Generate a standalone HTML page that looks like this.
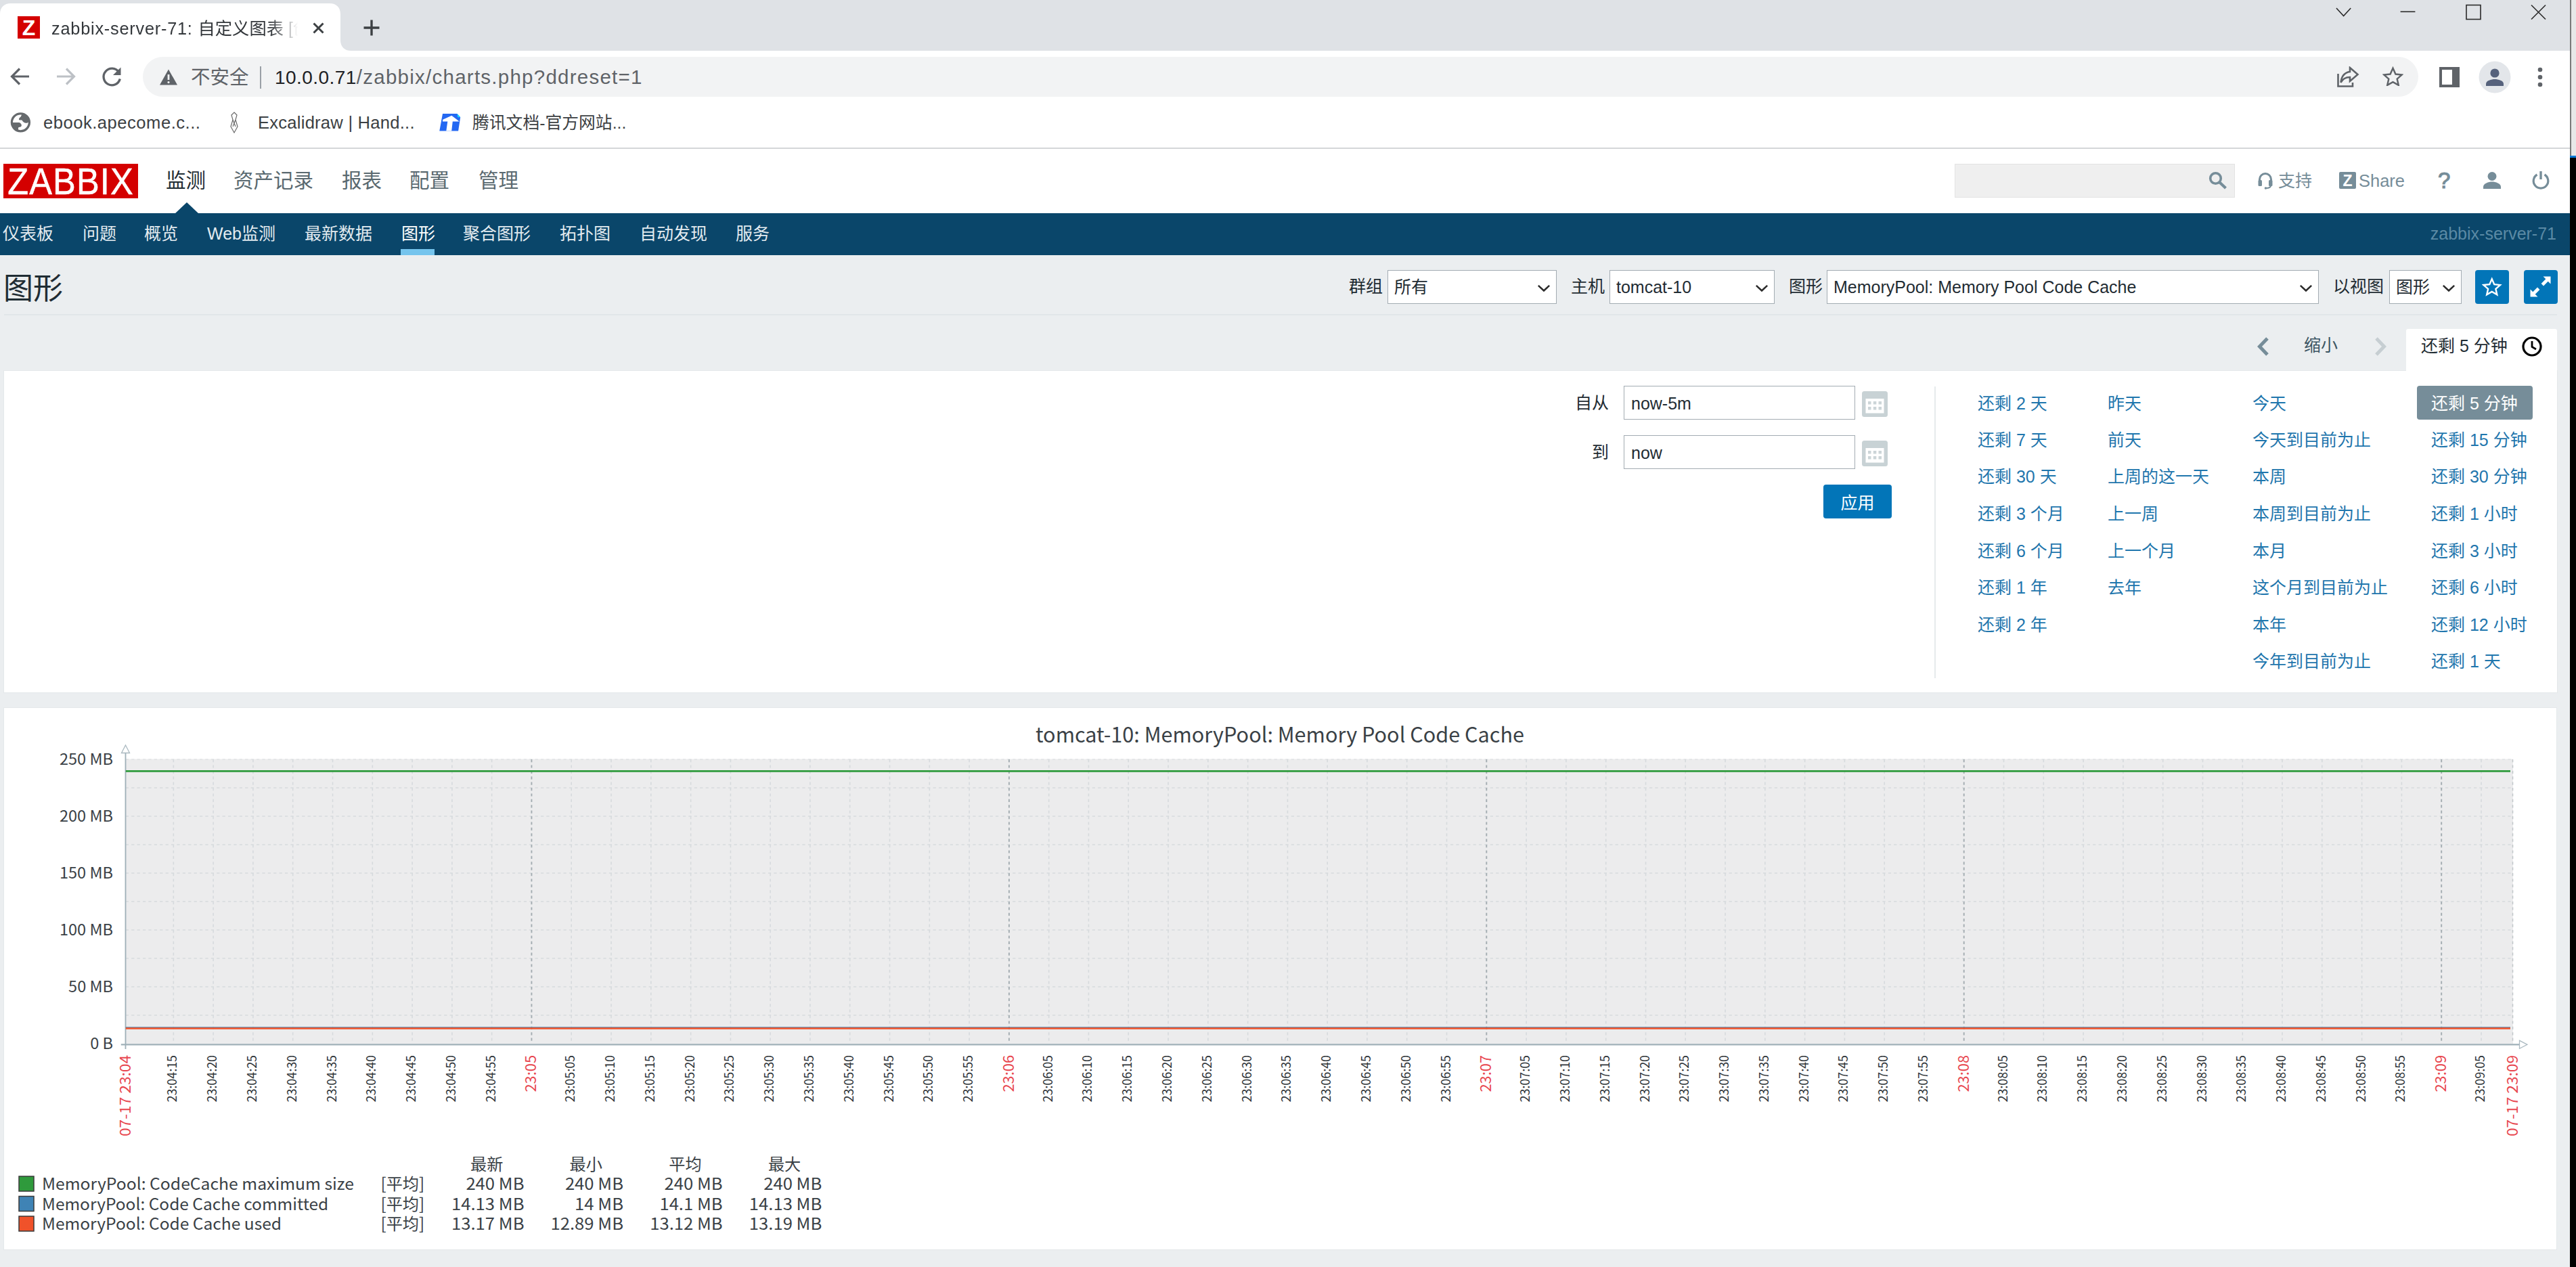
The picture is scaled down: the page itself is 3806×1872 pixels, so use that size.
<!DOCTYPE html>
<html lang="zh-CN"><head><meta charset="utf-8"><title>zabbix-server-71: 自定义图表</title>
<style>
html,body{margin:0;padding:0;background:#ebeef0}
body{width:3806px;height:1872px;position:relative;overflow:hidden;font-family:'Liberation Sans','Noto Sans CJK SC',sans-serif}
body>div,body>svg{position:absolute;display:block}
.t{white-space:pre}
</style></head><body>
<div style="left:0px;top:0px;width:3798px;height:75px;background:#dfe2e6;"></div>
<svg style="left:-16px;top:5px" width="540" height="70" viewBox="0 0 540 70"><path d="M0 70 C10 70 16 64 16 54 L16 16 C16 6 22 0 32 0 L503 0 C513 0 519 6 519 16 L519 54 C519 64 525 70 535 70 Z" fill="#fff"/></svg>
<div style="left:0px;top:75px;width:3798px;height:144px;background:#fff;"></div>
<div style="left:0px;top:218px;width:3798px;height:2px;background:#d4d6d8;"></div>
<div style="left:26px;top:24px;width:33px;height:33px;background:#d40000;color:#fff;font:bold 32px/34px 'Liberation Sans',sans-serif;text-align:center">Z</div>
<div class="t" style="left:76px;top:25px;width:368px;overflow:hidden;font:25.3px/34px 'Liberation Sans','Noto Sans CJK SC',sans-serif;color:#33373b;-webkit-mask-image:linear-gradient(90deg,#000 88%,transparent 99%);mask-image:linear-gradient(90deg,#000 88%,transparent 99%)"><span style="letter-spacing:0.78px">zabbix-server-71: </span>自定义图表 [创建</div>
<svg style="left:462px;top:33px" width="17" height="17" viewBox="0 0 17 17"><path d="M1.5 1.5 L15.5 15.5 M15.5 1.5 L1.5 15.5" stroke="#3c4043" stroke-width="3" fill="none"/></svg>
<svg style="left:537px;top:29px" width="24" height="24" viewBox="0 0 24 24"><path d="M12 0.5 V23.5 M0.5 12 H23.5" stroke="#3c4043" stroke-width="3.4" fill="none"/></svg>
<svg style="left:3440px;top:0" width="340" height="40" viewBox="0 0 340 40"><g stroke="#2b2b2b" stroke-width="1.6" fill="none"><path d="M12 12 L22.6 23.5 L33.2 12"/><path d="M106.6 17.3 H128.4"/><rect x="204" y="7.5" width="21" height="21"/><path d="M300 7.5 L321 28.5 M321 7.5 L300 28.5"/></g></svg>
<svg style="left:14px;top:98px" width="32" height="30" viewBox="0 0 32 30"><path d="M29 15 H4 M15 3.5 L3.5 15 L15 26.5" stroke="#5f6368" stroke-width="3.2" fill="none"/></svg>
<svg style="left:81px;top:98px" width="32" height="30" viewBox="0 0 32 30"><path d="M3 15 H28 M17 3.5 L28.5 15 L17 26.5" stroke="#bdc1c6" stroke-width="3.2" fill="none"/></svg>
<svg style="left:148px;top:97px" width="34" height="34" viewBox="0 0 34 34"><path d="M27.5 9.5 A12.3 12.3 0 1 0 29.3 19.5" stroke="#5f6368" stroke-width="3.3" fill="none"/><path d="M30.5 2.5 V14 H19 Z" fill="#5f6368"/></svg>
<div style="left:211px;top:84px;width:3362px;height:59px;background:#f2f3f4;border-radius:30px"></div>
<svg style="left:235px;top:101px" width="28" height="26" viewBox="0 0 28 26"><path d="M14 1.5 L27 24.5 H1 Z" fill="#5f6368"/><path d="M14 9 V17" stroke="#f1f3f4" stroke-width="2.8"/><circle cx="14" cy="20.6" r="1.6" fill="#f1f3f4"/></svg>
<div class="t" style="left:282px;top:93.5px;font:28.5px/40px 'Liberation Sans','Noto Sans CJK SC',sans-serif;color:#5f6368;">不安全</div>
<div style="left:384px;top:98px;width:2px;height:33px;background:#9aa0a6;"></div>
<div class="t" style="left:406px;top:93.5px;font:28px/39px 'Liberation Sans','Noto Sans CJK SC',sans-serif;color:#5f6368;letter-spacing:0.45px"><span style="color:#202124">10.0.0.71</span><span style="font-size:29.5px;letter-spacing:1.25px">/zabbix/charts.php?ddreset=1</span></div>
<svg style="left:3451px;top:98px" width="36" height="32" viewBox="0 0 36 32"><g stroke="#5f6368" stroke-width="2.6" fill="none" stroke-linejoin="miter"><path d="M3.5 11 V29.5 H25 V24"/><path d="M21 2 L32.5 12 L21 22 V16 C14 16 10 19 7.5 24 C8.5 15 13 9 21 8 Z"/></g></svg>
<svg style="left:3519.5px;top:98px" width="31" height="29.200" viewBox="0 0 34 32"><path d="M17 3 L21.3 12.6 L31.6 13.6 L23.8 20.5 L26.1 30.6 L17 25.3 L7.9 30.6 L10.2 20.5 L2.4 13.6 L12.7 12.6 Z" stroke="#5f6368" stroke-width="2.7" fill="none"/></svg>
<svg style="left:3604px;top:99px" width="30" height="30" viewBox="0 0 30 30"><rect x="2" y="2" width="26" height="26" stroke="#5f6368" stroke-width="4" fill="none"/><rect x="19" y="2" width="9" height="26" fill="#5f6368"/></svg>
<svg style="left:3662px;top:90px" width="48" height="48" viewBox="0 0 48 48"><circle cx="24" cy="24" r="23.5" fill="#e3e6ea"/><circle cx="24" cy="18" r="6.6" fill="#56627c"/><path d="M11 37 V34 C11 29 19 27 24 27 C29 27 37 29 37 34 V37 Z" fill="#56627c"/></svg>
<svg style="left:3748px;top:98px" width="10" height="32" viewBox="0 0 10 32"><g fill="#5f6368"><circle cx="5" cy="5" r="3.3"/><circle cx="5" cy="16" r="3.3"/><circle cx="5" cy="27" r="3.3"/></g></svg>
<svg style="left:15px;top:166px" width="31" height="31" viewBox="0 0 31 31"><defs><clipPath id="gc"><circle cx="15.400" cy="14.800" r="13.500"/></clipPath></defs><circle cx="15.400" cy="14.800" r="13" fill="#fff" stroke="#666a6d" stroke-width="3.300"/><g clip-path="url(#gc)" fill="#666a6d"><path d="M17.500 2 L31 2 L31 12 L27 14.500 C25.500 16 23.500 16 22 15.500 C20 15 18.500 13.500 17.500 11.500 L13.100 11.200 C12.800 9.500 13.300 8.400 14.500 7.500 C16 6.500 16.500 5 17.500 2 Z"/><path d="M0 15 L13.500 15 C15.500 16 17 17.500 16.800 19.500 C16.700 21 15.500 21.800 12.500 22 C11.500 24 11.800 26.500 13 29 L0 31 Z"/></g></svg>
<div class="t" style="left:64px;top:163.0px;font:25.6px/36px 'Liberation Sans','Noto Sans CJK SC',sans-serif;color:#3c4043;letter-spacing:0.5px">ebook.apecome.c...</div>
<svg style="left:338px;top:165px" width="16" height="32" viewBox="0 0 16 32"><path d="M8 1 L12 5 L10 12 L13 22 L8 31 L3 22 L6 12 L4 5 Z M6 12 L10 22 M10 12 L6 22" stroke="#6b6b6b" stroke-width="1.2" fill="none"/></svg>
<div class="t" style="left:381px;top:163.0px;font:25.6px/36px 'Liberation Sans','Noto Sans CJK SC',sans-serif;color:#3c4043;letter-spacing:0.23px">Excalidraw | Hand...</div>
<svg style="left:649px;top:167px" width="33" height="28" viewBox="0 0 33 28"><path d="M5 1 H26.500 L31.200 6.300 L28.100 26.500 H0.300 Z" fill="#2468f2"/><path d="M26.500 1 L31.200 6.300 H27.300 Z" fill="#12dcff"/><path d="M5.200 9.800 L18.300 3.800 L29.700 12.600 H19.800 L18.200 26.500 H10.300 L12.300 12.600 H5 Z" fill="#fff"/></svg>
<div class="t" style="left:698px;top:163.5px;font:24.8px/35px 'Liberation Sans','Noto Sans CJK SC',sans-serif;color:#3c4043;">腾讯文档-官方网站...</div>
<div style="left:3797px;top:0px;width:2px;height:230px;background:#7a7a7a;"></div>
<div style="left:3799px;top:0px;width:7px;height:230px;background:#e8e8e8;"></div>
<div style="left:3797px;top:230px;width:9px;height:3px;background:#0a78d6;"></div>
<div style="left:3797px;top:233px;width:9px;height:1639px;background:#000;"></div>
<div style="left:0px;top:220px;width:3797px;height:1652px;background:#ebeef0;"></div>
<div style="left:0px;top:220px;width:3797px;height:95px;background:#fff;"></div>
<div class="t" style="left:5px;top:242px;width:199px;height:51px;background:#d40000;overflow:hidden"><span style="position:absolute;left:-20px;top:-4.5px;width:239px;text-align:center;color:#fff;font:55.5px/60px 'Liberation Sans',sans-serif;letter-spacing:1.2px;transform:scaleX(0.912);-webkit-text-stroke:0.5px #fff">ZABBIX</span></div>
<div class="t" style="left:245px;top:245.5px;font:29.5px/41px 'Liberation Sans','Noto Sans CJK SC',sans-serif;color:#1f2c33;">监测</div>
<div class="t" style="left:345px;top:245.5px;font:29.5px/41px 'Liberation Sans','Noto Sans CJK SC',sans-serif;color:#5a6970;">资产记录</div>
<div class="t" style="left:505px;top:245.5px;font:29.5px/41px 'Liberation Sans','Noto Sans CJK SC',sans-serif;color:#5a6970;">报表</div>
<div class="t" style="left:605px;top:245.5px;font:29.5px/41px 'Liberation Sans','Noto Sans CJK SC',sans-serif;color:#5a6970;">配置</div>
<div class="t" style="left:707px;top:245.5px;font:29.5px/41px 'Liberation Sans','Noto Sans CJK SC',sans-serif;color:#5a6970;">管理</div>
<div style="left:2888px;top:242px;width:414px;height:50px;background:#efefef;box-shadow:inset 0 0 0 1px #e3e3e3"></div>
<svg style="left:3263px;top:253px" width="28" height="27" viewBox="0 0 28 27"><circle cx="10.5" cy="10.5" r="7.8" stroke="#768d99" stroke-width="3.6" fill="none"/><path d="M16 16 L25.5 25" stroke="#768d99" stroke-width="4.2"/></svg>
<svg style="left:3335px;top:254px" width="24" height="26" viewBox="0 0 24 26"><path d="M3.5 14 V11 A8.5 8.5 0 0 1 20.500 11 V14" stroke="#768d99" stroke-width="3" fill="none"/><rect x="1.5" y="12" width="5.5" height="9" rx="1.5" fill="#768d99"/><rect x="17" y="12" width="5.500" height="9" rx="1.5" fill="#768d99"/><path d="M20 20 C20 23 17 24 13 24" stroke="#768d99" stroke-width="2.2" fill="none"/><circle cx="12.5" cy="24" r="1.8" fill="#768d99"/></svg>
<div class="t" style="left:3366px;top:249.7px;font:25px/35px 'Liberation Sans','Noto Sans CJK SC',sans-serif;color:#768d99;">支持</div>
<div style="left:3456px;top:254px;width:25px;height:25px;background:#768d99;border-radius:2px;color:#fff;font:bold 23px/26px 'Liberation Sans',sans-serif;text-align:center">Z</div>
<div class="t" style="left:3485px;top:249.0px;font:25.5px/36px 'Liberation Sans','Noto Sans CJK SC',sans-serif;color:#768d99;">Share</div>
<div class="t" style="left:3602px;top:244.0px;font:33px/46px 'Liberation Sans','Noto Sans CJK SC',sans-serif;color:#768d99;-webkit-text-stroke:1.1px #768d99">?</div>
<svg style="left:3668px;top:253px" width="28" height="27" viewBox="0 0 28 27"><circle cx="14" cy="7.5" r="6.5" fill="#768d99"/><path d="M1 26 V23 C1 18 9 15.500 14 15.500 C19 15.500 27 18 27 23 V26 Z" fill="#768d99"/></svg>
<svg style="left:3740px;top:252px" width="28" height="28" viewBox="0 0 28 28"><path d="M8.5 6 A10.800 10.800 0 1 0 19.500 6" stroke="#768d99" stroke-width="3.2" fill="none"/><path d="M14 1 V13" stroke="#768d99" stroke-width="3.4"/></svg>
<div style="left:0px;top:315px;width:3797px;height:62px;background:#0a466a;"></div>
<svg style="left:258px;top:299px" width="36" height="17" viewBox="0 0 36 17"><path d="M0 17 L18 0 L36 17 Z" fill="#0a466a"/></svg>
<div class="t" style="left:4px;top:327.5px;font:25px/35px 'Liberation Sans','Noto Sans CJK SC',sans-serif;color:#e3ebf0;">仪表板</div>
<div class="t" style="left:122px;top:327.5px;font:25px/35px 'Liberation Sans','Noto Sans CJK SC',sans-serif;color:#e3ebf0;">问题</div>
<div class="t" style="left:213px;top:327.5px;font:25px/35px 'Liberation Sans','Noto Sans CJK SC',sans-serif;color:#e3ebf0;">概览</div>
<div class="t" style="left:306px;top:327.5px;font:25px/35px 'Liberation Sans','Noto Sans CJK SC',sans-serif;color:#e3ebf0;">Web监测</div>
<div class="t" style="left:450px;top:327.5px;font:25px/35px 'Liberation Sans','Noto Sans CJK SC',sans-serif;color:#e3ebf0;">最新数据</div>
<div class="t" style="left:684px;top:327.5px;font:25px/35px 'Liberation Sans','Noto Sans CJK SC',sans-serif;color:#e3ebf0;">聚合图形</div>
<div class="t" style="left:827px;top:327.5px;font:25px/35px 'Liberation Sans','Noto Sans CJK SC',sans-serif;color:#e3ebf0;">拓扑图</div>
<div class="t" style="left:945px;top:327.5px;font:25px/35px 'Liberation Sans','Noto Sans CJK SC',sans-serif;color:#e3ebf0;">自动发现</div>
<div class="t" style="left:1087px;top:327.5px;font:25px/35px 'Liberation Sans','Noto Sans CJK SC',sans-serif;color:#e3ebf0;">服务</div>
<div class="t" style="left:593px;top:327.5px;font:25px/35px 'Liberation Sans','Noto Sans CJK SC',sans-serif;color:#fff;">图形</div>
<div style="left:592px;top:368px;width:50px;height:9px;background:#75c4ed;"></div>
<div class="t" style="right:29px;top:327.5px;font:25px/35px 'Liberation Sans','Noto Sans CJK SC',sans-serif;color:#5b8aa5;">zabbix-server-71</div>
<div class="t" style="left:5px;top:397.0px;font:44px/60px 'Liberation Sans','Noto Sans CJK SC',sans-serif;color:#1f2c33;">图形</div>
<div class="t" style="left:1993px;top:406.0px;font:25px/35px 'Liberation Sans','Noto Sans CJK SC',sans-serif;color:#1f2c33;">群组</div>
<div style="left:2050px;top:399px;width:250px;height:50px;background:#fff;border:1px solid #a3acb2;box-sizing:border-box"></div>
<div class="t" style="left:2060px;top:406.8px;font:25px/35px 'Liberation Sans','Noto Sans CJK SC',sans-serif;color:#1f2c33;">所有</div>
<svg style="left:2270.5px;top:419.5px" width="20" height="11.800" viewBox="0 0 22 13"><path d="M2 2 L11 10.500 L20 2" stroke="#2b2b2b" stroke-width="2.8" fill="none"/></svg>
<div class="t" style="left:2321px;top:406.0px;font:25px/35px 'Liberation Sans','Noto Sans CJK SC',sans-serif;color:#1f2c33;">主机</div>
<div style="left:2378px;top:399px;width:244px;height:50px;background:#fff;border:1px solid #a3acb2;box-sizing:border-box"></div>
<div class="t" style="left:2388px;top:406.8px;font:25px/35px 'Liberation Sans','Noto Sans CJK SC',sans-serif;color:#1f2c33;">tomcat-10</div>
<svg style="left:2592.5px;top:419.5px" width="20" height="11.800" viewBox="0 0 22 13"><path d="M2 2 L11 10.500 L20 2" stroke="#2b2b2b" stroke-width="2.8" fill="none"/></svg>
<div class="t" style="left:2643px;top:406.0px;font:25px/35px 'Liberation Sans','Noto Sans CJK SC',sans-serif;color:#1f2c33;">图形</div>
<div style="left:2699px;top:399px;width:727px;height:50px;background:#fff;border:1px solid #a3acb2;box-sizing:border-box"></div>
<div class="t" style="left:2709px;top:406.8px;font:25px/35px 'Liberation Sans','Noto Sans CJK SC',sans-serif;color:#1f2c33;">MemoryPool: Memory Pool Code Cache</div>
<svg style="left:3396.5px;top:419.5px" width="20" height="11.800" viewBox="0 0 22 13"><path d="M2 2 L11 10.500 L20 2" stroke="#2b2b2b" stroke-width="2.8" fill="none"/></svg>
<div class="t" style="left:3447px;top:406.0px;font:25px/35px 'Liberation Sans','Noto Sans CJK SC',sans-serif;color:#1f2c33;">以视图</div>
<div style="left:3530px;top:399px;width:107px;height:50px;background:#fff;border:1px solid #a3acb2;box-sizing:border-box"></div>
<div class="t" style="left:3540px;top:406.8px;font:25px/35px 'Liberation Sans','Noto Sans CJK SC',sans-serif;color:#1f2c33;">图形</div>
<svg style="left:3607.5px;top:419.5px" width="20" height="11.800" viewBox="0 0 22 13"><path d="M2 2 L11 10.500 L20 2" stroke="#2b2b2b" stroke-width="2.8" fill="none"/></svg>
<div style="left:3657px;top:399px;width:50px;height:50px;background:#0275b8;border-radius:4px"></div>
<svg style="left:3667.3px;top:408.5px" width="29.500" height="29.500" viewBox="0 0 32 32"><path d="M16 3.500 L19.800 12.200 L29.200 13.100 L22.100 19.400 L24.200 28.600 L16 23.800 L7.800 28.600 L9.900 19.400 L2.800 13.100 L12.200 12.200 Z" stroke="#fff" stroke-width="2.6" fill="none"/></svg>
<div style="left:3729px;top:399px;width:50px;height:50px;background:#0275b8;border-radius:4px"></div>
<svg style="left:3736px;top:406px" width="36" height="36" viewBox="0 0 36 36"><g fill="#fff"><path d="M32.500 2.500 V13.500 L28.700 9.700 L22 16.400 L18.600 13 L25.300 6.300 L21.500 2.500 Z"/><path d="M2.500 32.500 V21.500 L6.300 25.300 L13 18.600 L16.400 22 L9.700 28.700 L13.500 32.500 Z"/></g></svg>
<div style="left:6px;top:464px;width:3772px;height:2px;background:#e1e6e9;"></div>
<svg style="left:3334px;top:497px" width="20" height="30" viewBox="0 0 20 30"><path d="M16 3 L4.500 15 L16 27" stroke="#768d99" stroke-width="5" fill="none"/></svg>
<div class="t" style="left:3404px;top:493.0px;font:25px/35px 'Liberation Sans','Noto Sans CJK SC',sans-serif;color:#3c5563;">缩小</div>
<svg style="left:3507px;top:497px" width="20" height="30" viewBox="0 0 20 30"><path d="M4 3 L15.500 15 L4 27" stroke="#c6ced2" stroke-width="5" fill="none"/></svg>
<div style="left:6px;top:548px;width:3772px;height:475px;background:#fff;box-shadow:0 0 0 1px #e4e8ea"></div>
<div style="left:3555px;top:486px;width:223px;height:66px;background:#fff;border-radius:3px 3px 0 0"></div>
<div class="t" style="left:3577px;top:494.0px;font:25px/35px 'Liberation Sans','Noto Sans CJK SC',sans-serif;color:#1f2c33;">还剩 5 分钟</div>
<svg style="left:3724.5px;top:495.5px" width="32" height="32" viewBox="0 0 32 32"><circle cx="16" cy="16" r="13" stroke="#000" stroke-width="3.2" fill="none"/><path d="M16 8 V16.500 L22 20" stroke="#000" stroke-width="2.8" fill="none"/></svg>
<div class="t" style="right:1429px;top:577.5px;font:25px/35px 'Liberation Sans','Noto Sans CJK SC',sans-serif;color:#1f2c33;">自从</div>
<div class="t" style="right:1429px;top:650.5px;font:25px/35px 'Liberation Sans','Noto Sans CJK SC',sans-serif;color:#1f2c33;">到</div>
<div style="left:2399px;top:570px;width:342px;height:50px;background:#fff;border:1px solid #a3acb2;box-sizing:border-box"></div>
<div class="t" style="left:2410px;top:578.5px;font:25px/35px 'Liberation Sans','Noto Sans CJK SC',sans-serif;color:#1f2c33;">now-5m</div>
<svg style="left:2751px;top:578px" width="38" height="38" viewBox="0 0 38 38"><rect x="0" y="0" width="38" height="38" rx="3.500" fill="#c8d2d5"/><rect x="5.500" y="11" width="27" height="21.500" fill="#fff"/><g fill="#ccd5d8"><rect x="9" y="15" width="4.500" height="4.500"/><rect x="16.800" y="15" width="4.500" height="4.500"/><rect x="24.500" y="15" width="4.500" height="4.500"/><rect x="9" y="23" width="4.500" height="4.500"/><rect x="16.800" y="23" width="4.500" height="4.500"/><rect x="24.500" y="23" width="4.500" height="4.500"/></g></svg>
<div style="left:2399px;top:643px;width:342px;height:50px;background:#fff;border:1px solid #a3acb2;box-sizing:border-box"></div>
<div class="t" style="left:2410px;top:651.5px;font:25px/35px 'Liberation Sans','Noto Sans CJK SC',sans-serif;color:#1f2c33;">now</div>
<svg style="left:2751px;top:651px" width="38" height="38" viewBox="0 0 38 38"><rect x="0" y="0" width="38" height="38" rx="3.500" fill="#c8d2d5"/><rect x="5.500" y="11" width="27" height="21.500" fill="#fff"/><g fill="#ccd5d8"><rect x="9" y="15" width="4.500" height="4.500"/><rect x="16.800" y="15" width="4.500" height="4.500"/><rect x="24.500" y="15" width="4.500" height="4.500"/><rect x="9" y="23" width="4.500" height="4.500"/><rect x="16.800" y="23" width="4.500" height="4.500"/><rect x="24.500" y="23" width="4.500" height="4.500"/></g></svg>
<div class="t" style="left:2694px;top:716px;width:101px;height:50px;background:#0275b8;border-radius:4px;color:#fff;font:25px/54px 'Liberation Sans','Noto Sans CJK SC',sans-serif;text-align:center">应用</div>
<div style="left:2858px;top:571px;width:2px;height:431px;background:#e6eaec;"></div>
<div class="t" style="left:2922px;top:578.5px;font:25px/35px 'Liberation Sans','Noto Sans CJK SC',sans-serif;color:#1f76ad;">还剩 2 天</div>
<div class="t" style="left:2922px;top:632.5px;font:25px/35px 'Liberation Sans','Noto Sans CJK SC',sans-serif;color:#1f76ad;">还剩 7 天</div>
<div class="t" style="left:2922px;top:687.0px;font:25px/35px 'Liberation Sans','Noto Sans CJK SC',sans-serif;color:#1f76ad;">还剩 30 天</div>
<div class="t" style="left:2922px;top:741.5px;font:25px/35px 'Liberation Sans','Noto Sans CJK SC',sans-serif;color:#1f76ad;">还剩 3 个月</div>
<div class="t" style="left:2922px;top:796.5px;font:25px/35px 'Liberation Sans','Noto Sans CJK SC',sans-serif;color:#1f76ad;">还剩 6 个月</div>
<div class="t" style="left:2922px;top:850.5px;font:25px/35px 'Liberation Sans','Noto Sans CJK SC',sans-serif;color:#1f76ad;">还剩 1 年</div>
<div class="t" style="left:2922px;top:905.5px;font:25px/35px 'Liberation Sans','Noto Sans CJK SC',sans-serif;color:#1f76ad;">还剩 2 年</div>
<div class="t" style="left:3114px;top:578.5px;font:25px/35px 'Liberation Sans','Noto Sans CJK SC',sans-serif;color:#1f76ad;">昨天</div>
<div class="t" style="left:3114px;top:632.5px;font:25px/35px 'Liberation Sans','Noto Sans CJK SC',sans-serif;color:#1f76ad;">前天</div>
<div class="t" style="left:3114px;top:687.0px;font:25px/35px 'Liberation Sans','Noto Sans CJK SC',sans-serif;color:#1f76ad;">上周的这一天</div>
<div class="t" style="left:3114px;top:741.5px;font:25px/35px 'Liberation Sans','Noto Sans CJK SC',sans-serif;color:#1f76ad;">上一周</div>
<div class="t" style="left:3114px;top:796.5px;font:25px/35px 'Liberation Sans','Noto Sans CJK SC',sans-serif;color:#1f76ad;">上一个月</div>
<div class="t" style="left:3114px;top:850.5px;font:25px/35px 'Liberation Sans','Noto Sans CJK SC',sans-serif;color:#1f76ad;">去年</div>
<div class="t" style="left:3328px;top:578.5px;font:25px/35px 'Liberation Sans','Noto Sans CJK SC',sans-serif;color:#1f76ad;">今天</div>
<div class="t" style="left:3328px;top:632.5px;font:25px/35px 'Liberation Sans','Noto Sans CJK SC',sans-serif;color:#1f76ad;">今天到目前为止</div>
<div class="t" style="left:3328px;top:687.0px;font:25px/35px 'Liberation Sans','Noto Sans CJK SC',sans-serif;color:#1f76ad;">本周</div>
<div class="t" style="left:3328px;top:741.5px;font:25px/35px 'Liberation Sans','Noto Sans CJK SC',sans-serif;color:#1f76ad;">本周到目前为止</div>
<div class="t" style="left:3328px;top:796.5px;font:25px/35px 'Liberation Sans','Noto Sans CJK SC',sans-serif;color:#1f76ad;">本月</div>
<div class="t" style="left:3328px;top:850.5px;font:25px/35px 'Liberation Sans','Noto Sans CJK SC',sans-serif;color:#1f76ad;">这个月到目前为止</div>
<div class="t" style="left:3328px;top:905.5px;font:25px/35px 'Liberation Sans','Noto Sans CJK SC',sans-serif;color:#1f76ad;">本年</div>
<div class="t" style="left:3328px;top:959.5px;font:25px/35px 'Liberation Sans','Noto Sans CJK SC',sans-serif;color:#1f76ad;">今年到目前为止</div>
<div class="t" style="left:3592px;top:632.5px;font:25px/35px 'Liberation Sans','Noto Sans CJK SC',sans-serif;color:#1f76ad;">还剩 15 分钟</div>
<div class="t" style="left:3592px;top:687.0px;font:25px/35px 'Liberation Sans','Noto Sans CJK SC',sans-serif;color:#1f76ad;">还剩 30 分钟</div>
<div class="t" style="left:3592px;top:741.5px;font:25px/35px 'Liberation Sans','Noto Sans CJK SC',sans-serif;color:#1f76ad;">还剩 1 小时</div>
<div class="t" style="left:3592px;top:796.5px;font:25px/35px 'Liberation Sans','Noto Sans CJK SC',sans-serif;color:#1f76ad;">还剩 3 小时</div>
<div class="t" style="left:3592px;top:850.5px;font:25px/35px 'Liberation Sans','Noto Sans CJK SC',sans-serif;color:#1f76ad;">还剩 6 小时</div>
<div class="t" style="left:3592px;top:905.5px;font:25px/35px 'Liberation Sans','Noto Sans CJK SC',sans-serif;color:#1f76ad;">还剩 12 小时</div>
<div class="t" style="left:3592px;top:959.5px;font:25px/35px 'Liberation Sans','Noto Sans CJK SC',sans-serif;color:#1f76ad;">还剩 1 天</div>
<div style="left:3571px;top:570px;width:171px;height:50px;background:#768d99;border-radius:4px"></div>
<div class="t" style="left:3592px;top:578.5px;font:25px/35px 'Liberation Sans','Noto Sans CJK SC',sans-serif;color:#fff;">还剩 5 分钟</div>
<div style="left:6px;top:1046px;width:3771px;height:800px;background:#fff;box-shadow:0 0 0 1px #e4e8ea"></div>
<svg style="left:0;top:1040px" width="3797" height="832" viewBox="0 1040 3797 832" font-family="'Noto Sans CJK SC','Liberation Sans',sans-serif"><rect x="185.8" y="1121.5" width="3527.2" height="421.0" fill="#ececed"/><path d="M185.8 1164.0 H3713.0" stroke="#d6dadd" stroke-width="1.6" stroke-dasharray="4.2 4.2"/><path d="M185.8 1206.0 H3713.0" stroke="#d6dadd" stroke-width="1.6" stroke-dasharray="4.2 4.2"/><path d="M185.8 1248.0 H3713.0" stroke="#d6dadd" stroke-width="1.6" stroke-dasharray="4.2 4.2"/><path d="M185.8 1290.0 H3713.0" stroke="#d6dadd" stroke-width="1.6" stroke-dasharray="4.2 4.2"/><path d="M185.8 1332.0 H3713.0" stroke="#d6dadd" stroke-width="1.6" stroke-dasharray="4.2 4.2"/><path d="M185.8 1374.0 H3713.0" stroke="#d6dadd" stroke-width="1.6" stroke-dasharray="4.2 4.2"/><path d="M185.8 1416.0 H3713.0" stroke="#d6dadd" stroke-width="1.6" stroke-dasharray="4.2 4.2"/><path d="M185.8 1458.0 H3713.0" stroke="#d6dadd" stroke-width="1.6" stroke-dasharray="4.2 4.2"/><path d="M185.8 1500.0 H3713.0" stroke="#d6dadd" stroke-width="1.6" stroke-dasharray="4.2 4.2"/><path d="M185.8 1122.0 H3713.0" stroke="#dfe2e4" stroke-width="1.5" stroke-dasharray="4.2 4.2"/><path d="M256.3 1122.0 V1542.0" stroke="#d6dadd" stroke-width="1.6" stroke-dasharray="4.2 4.2"/><path d="M315.1 1122.0 V1542.0" stroke="#d6dadd" stroke-width="1.6" stroke-dasharray="4.2 4.2"/><path d="M373.9 1122.0 V1542.0" stroke="#d6dadd" stroke-width="1.6" stroke-dasharray="4.2 4.2"/><path d="M432.7 1122.0 V1542.0" stroke="#d6dadd" stroke-width="1.6" stroke-dasharray="4.2 4.2"/><path d="M491.5 1122.0 V1542.0" stroke="#d6dadd" stroke-width="1.6" stroke-dasharray="4.2 4.2"/><path d="M550.3 1122.0 V1542.0" stroke="#d6dadd" stroke-width="1.6" stroke-dasharray="4.2 4.2"/><path d="M609.1 1122.0 V1542.0" stroke="#d6dadd" stroke-width="1.6" stroke-dasharray="4.2 4.2"/><path d="M667.9 1122.0 V1542.0" stroke="#d6dadd" stroke-width="1.6" stroke-dasharray="4.2 4.2"/><path d="M726.6 1122.0 V1542.0" stroke="#d6dadd" stroke-width="1.6" stroke-dasharray="4.2 4.2"/><path d="M785.4 1122.0 V1542.0" stroke="#a3acb1" stroke-width="1.9" stroke-dasharray="4.2 4.2"/><path d="M844.2 1122.0 V1542.0" stroke="#d6dadd" stroke-width="1.6" stroke-dasharray="4.2 4.2"/><path d="M903.0 1122.0 V1542.0" stroke="#d6dadd" stroke-width="1.6" stroke-dasharray="4.2 4.2"/><path d="M961.8 1122.0 V1542.0" stroke="#d6dadd" stroke-width="1.6" stroke-dasharray="4.2 4.2"/><path d="M1020.6 1122.0 V1542.0" stroke="#d6dadd" stroke-width="1.6" stroke-dasharray="4.2 4.2"/><path d="M1079.4 1122.0 V1542.0" stroke="#d6dadd" stroke-width="1.6" stroke-dasharray="4.2 4.2"/><path d="M1138.1 1122.0 V1542.0" stroke="#d6dadd" stroke-width="1.6" stroke-dasharray="4.2 4.2"/><path d="M1196.9 1122.0 V1542.0" stroke="#d6dadd" stroke-width="1.6" stroke-dasharray="4.2 4.2"/><path d="M1255.7 1122.0 V1542.0" stroke="#d6dadd" stroke-width="1.6" stroke-dasharray="4.2 4.2"/><path d="M1314.5 1122.0 V1542.0" stroke="#d6dadd" stroke-width="1.6" stroke-dasharray="4.2 4.2"/><path d="M1373.3 1122.0 V1542.0" stroke="#d6dadd" stroke-width="1.6" stroke-dasharray="4.2 4.2"/><path d="M1432.1 1122.0 V1542.0" stroke="#d6dadd" stroke-width="1.6" stroke-dasharray="4.2 4.2"/><path d="M1490.9 1122.0 V1542.0" stroke="#a3acb1" stroke-width="1.9" stroke-dasharray="4.2 4.2"/><path d="M1549.7 1122.0 V1542.0" stroke="#d6dadd" stroke-width="1.6" stroke-dasharray="4.2 4.2"/><path d="M1608.4 1122.0 V1542.0" stroke="#d6dadd" stroke-width="1.6" stroke-dasharray="4.2 4.2"/><path d="M1667.2 1122.0 V1542.0" stroke="#d6dadd" stroke-width="1.6" stroke-dasharray="4.2 4.2"/><path d="M1726.0 1122.0 V1542.0" stroke="#d6dadd" stroke-width="1.6" stroke-dasharray="4.2 4.2"/><path d="M1784.8 1122.0 V1542.0" stroke="#d6dadd" stroke-width="1.6" stroke-dasharray="4.2 4.2"/><path d="M1843.6 1122.0 V1542.0" stroke="#d6dadd" stroke-width="1.6" stroke-dasharray="4.2 4.2"/><path d="M1902.4 1122.0 V1542.0" stroke="#d6dadd" stroke-width="1.6" stroke-dasharray="4.2 4.2"/><path d="M1961.2 1122.0 V1542.0" stroke="#d6dadd" stroke-width="1.6" stroke-dasharray="4.2 4.2"/><path d="M2019.9 1122.0 V1542.0" stroke="#d6dadd" stroke-width="1.6" stroke-dasharray="4.2 4.2"/><path d="M2078.7 1122.0 V1542.0" stroke="#d6dadd" stroke-width="1.6" stroke-dasharray="4.2 4.2"/><path d="M2137.5 1122.0 V1542.0" stroke="#d6dadd" stroke-width="1.6" stroke-dasharray="4.2 4.2"/><path d="M2196.3 1122.0 V1542.0" stroke="#a3acb1" stroke-width="1.9" stroke-dasharray="4.2 4.2"/><path d="M2255.1 1122.0 V1542.0" stroke="#d6dadd" stroke-width="1.6" stroke-dasharray="4.2 4.2"/><path d="M2313.9 1122.0 V1542.0" stroke="#d6dadd" stroke-width="1.6" stroke-dasharray="4.2 4.2"/><path d="M2372.7 1122.0 V1542.0" stroke="#d6dadd" stroke-width="1.6" stroke-dasharray="4.2 4.2"/><path d="M2431.5 1122.0 V1542.0" stroke="#d6dadd" stroke-width="1.6" stroke-dasharray="4.2 4.2"/><path d="M2490.2 1122.0 V1542.0" stroke="#d6dadd" stroke-width="1.6" stroke-dasharray="4.2 4.2"/><path d="M2549.0 1122.0 V1542.0" stroke="#d6dadd" stroke-width="1.6" stroke-dasharray="4.2 4.2"/><path d="M2607.8 1122.0 V1542.0" stroke="#d6dadd" stroke-width="1.6" stroke-dasharray="4.2 4.2"/><path d="M2666.6 1122.0 V1542.0" stroke="#d6dadd" stroke-width="1.6" stroke-dasharray="4.2 4.2"/><path d="M2725.4 1122.0 V1542.0" stroke="#d6dadd" stroke-width="1.6" stroke-dasharray="4.2 4.2"/><path d="M2784.2 1122.0 V1542.0" stroke="#d6dadd" stroke-width="1.6" stroke-dasharray="4.2 4.2"/><path d="M2843.0 1122.0 V1542.0" stroke="#d6dadd" stroke-width="1.6" stroke-dasharray="4.2 4.2"/><path d="M2901.7 1122.0 V1542.0" stroke="#a3acb1" stroke-width="1.9" stroke-dasharray="4.2 4.2"/><path d="M2960.5 1122.0 V1542.0" stroke="#d6dadd" stroke-width="1.6" stroke-dasharray="4.2 4.2"/><path d="M3019.3 1122.0 V1542.0" stroke="#d6dadd" stroke-width="1.6" stroke-dasharray="4.2 4.2"/><path d="M3078.1 1122.0 V1542.0" stroke="#d6dadd" stroke-width="1.6" stroke-dasharray="4.2 4.2"/><path d="M3136.9 1122.0 V1542.0" stroke="#d6dadd" stroke-width="1.6" stroke-dasharray="4.2 4.2"/><path d="M3195.7 1122.0 V1542.0" stroke="#d6dadd" stroke-width="1.6" stroke-dasharray="4.2 4.2"/><path d="M3254.5 1122.0 V1542.0" stroke="#d6dadd" stroke-width="1.6" stroke-dasharray="4.2 4.2"/><path d="M3313.3 1122.0 V1542.0" stroke="#d6dadd" stroke-width="1.6" stroke-dasharray="4.2 4.2"/><path d="M3372.0 1122.0 V1542.0" stroke="#d6dadd" stroke-width="1.6" stroke-dasharray="4.2 4.2"/><path d="M3430.8 1122.0 V1542.0" stroke="#d6dadd" stroke-width="1.6" stroke-dasharray="4.2 4.2"/><path d="M3489.6 1122.0 V1542.0" stroke="#d6dadd" stroke-width="1.6" stroke-dasharray="4.2 4.2"/><path d="M3548.4 1122.0 V1542.0" stroke="#d6dadd" stroke-width="1.6" stroke-dasharray="4.2 4.2"/><path d="M3607.2 1122.0 V1542.0" stroke="#a3acb1" stroke-width="1.9" stroke-dasharray="4.2 4.2"/><path d="M3666.0 1122.0 V1542.0" stroke="#d6dadd" stroke-width="1.6" stroke-dasharray="4.2 4.2"/><path d="M3712.5 1122.0 V1542.0" stroke="#c2c8cb" stroke-width="1.6" stroke-dasharray="4.2 4.2"/><path d="M185.5 1111.0 V1550.0" stroke="#9fb0b8" stroke-width="1.8"/><path d="M178.8 1543.3 H3723.0" stroke="#9fb0b8" stroke-width="2.2"/><path d="M185.5 1101.0 L191.5 1112.5 H179.5 Z" stroke="#aab9c0" stroke-width="1.3" fill="#fff"/><path d="M3734.0 1543.3 L3722.5 1537.3 V1549.3 Z" stroke="#aab9c0" stroke-width="1.3" fill="#fff"/><path d="M185.8 1139.3 H3709.0" stroke="#2f9a3c" stroke-width="2.7"/><path d="M185.8 1518.0 H3709.0" stroke="#4a7fa8" stroke-width="1.3"/><path d="M185.8 1519.6 H3709.0" stroke="#f0522a" stroke-width="2.5"/><text x="1530" y="1096.5" font-size="30.6" fill="#3a4146" text-anchor="start" textLength="722" lengthAdjust="spacingAndGlyphs">tomcat-10: MemoryPool: Memory Pool Code Cache</text><text x="167" y="1549.5" font-size="22.5" fill="#3a4146" text-anchor="end" textLength="33.8" lengthAdjust="spacingAndGlyphs">0 B</text><text x="167" y="1465.5" font-size="22.5" fill="#3a4146" text-anchor="end" textLength="65.9" lengthAdjust="spacingAndGlyphs">50 MB</text><text x="167" y="1381.5" font-size="22.5" fill="#3a4146" text-anchor="end" textLength="79.0" lengthAdjust="spacingAndGlyphs">100 MB</text><text x="167" y="1297.5" font-size="22.5" fill="#3a4146" text-anchor="end" textLength="79.0" lengthAdjust="spacingAndGlyphs">150 MB</text><text x="167" y="1213.5" font-size="22.5" fill="#3a4146" text-anchor="end" textLength="79.0" lengthAdjust="spacingAndGlyphs">200 MB</text><text x="167" y="1129.5" font-size="22.5" fill="#3a4146" text-anchor="end" textLength="79.0" lengthAdjust="spacingAndGlyphs">250 MB</text><text transform="translate(261.3 1628.5) rotate(-90)" font-size="18.8" fill="#30363a" textLength="69.5" lengthAdjust="spacingAndGlyphs">23:04:15</text><text transform="translate(320.1 1628.5) rotate(-90)" font-size="18.8" fill="#30363a" textLength="69.5" lengthAdjust="spacingAndGlyphs">23:04:20</text><text transform="translate(378.9 1628.5) rotate(-90)" font-size="18.8" fill="#30363a" textLength="69.5" lengthAdjust="spacingAndGlyphs">23:04:25</text><text transform="translate(437.7 1628.5) rotate(-90)" font-size="18.8" fill="#30363a" textLength="69.5" lengthAdjust="spacingAndGlyphs">23:04:30</text><text transform="translate(496.5 1628.5) rotate(-90)" font-size="18.8" fill="#30363a" textLength="69.5" lengthAdjust="spacingAndGlyphs">23:04:35</text><text transform="translate(555.3 1628.5) rotate(-90)" font-size="18.8" fill="#30363a" textLength="69.5" lengthAdjust="spacingAndGlyphs">23:04:40</text><text transform="translate(614.1 1628.5) rotate(-90)" font-size="18.8" fill="#30363a" textLength="69.5" lengthAdjust="spacingAndGlyphs">23:04:45</text><text transform="translate(672.9 1628.5) rotate(-90)" font-size="18.8" fill="#30363a" textLength="69.5" lengthAdjust="spacingAndGlyphs">23:04:50</text><text transform="translate(731.6 1628.5) rotate(-90)" font-size="18.8" fill="#30363a" textLength="69.5" lengthAdjust="spacingAndGlyphs">23:04:55</text><text transform="translate(792.4 1613.5) rotate(-90)" font-size="22" fill="#e8474f" textLength="54.5" lengthAdjust="spacingAndGlyphs">23:05</text><text transform="translate(849.2 1628.5) rotate(-90)" font-size="18.8" fill="#30363a" textLength="69.5" lengthAdjust="spacingAndGlyphs">23:05:05</text><text transform="translate(908.0 1628.5) rotate(-90)" font-size="18.8" fill="#30363a" textLength="69.5" lengthAdjust="spacingAndGlyphs">23:05:10</text><text transform="translate(966.8 1628.5) rotate(-90)" font-size="18.8" fill="#30363a" textLength="69.5" lengthAdjust="spacingAndGlyphs">23:05:15</text><text transform="translate(1025.6 1628.5) rotate(-90)" font-size="18.8" fill="#30363a" textLength="69.5" lengthAdjust="spacingAndGlyphs">23:05:20</text><text transform="translate(1084.4 1628.5) rotate(-90)" font-size="18.8" fill="#30363a" textLength="69.5" lengthAdjust="spacingAndGlyphs">23:05:25</text><text transform="translate(1143.1 1628.5) rotate(-90)" font-size="18.8" fill="#30363a" textLength="69.5" lengthAdjust="spacingAndGlyphs">23:05:30</text><text transform="translate(1201.9 1628.5) rotate(-90)" font-size="18.8" fill="#30363a" textLength="69.5" lengthAdjust="spacingAndGlyphs">23:05:35</text><text transform="translate(1260.7 1628.5) rotate(-90)" font-size="18.8" fill="#30363a" textLength="69.5" lengthAdjust="spacingAndGlyphs">23:05:40</text><text transform="translate(1319.5 1628.5) rotate(-90)" font-size="18.8" fill="#30363a" textLength="69.5" lengthAdjust="spacingAndGlyphs">23:05:45</text><text transform="translate(1378.3 1628.5) rotate(-90)" font-size="18.8" fill="#30363a" textLength="69.5" lengthAdjust="spacingAndGlyphs">23:05:50</text><text transform="translate(1437.1 1628.5) rotate(-90)" font-size="18.8" fill="#30363a" textLength="69.5" lengthAdjust="spacingAndGlyphs">23:05:55</text><text transform="translate(1497.9 1613.5) rotate(-90)" font-size="22" fill="#e8474f" textLength="54.5" lengthAdjust="spacingAndGlyphs">23:06</text><text transform="translate(1554.7 1628.5) rotate(-90)" font-size="18.8" fill="#30363a" textLength="69.5" lengthAdjust="spacingAndGlyphs">23:06:05</text><text transform="translate(1613.4 1628.5) rotate(-90)" font-size="18.8" fill="#30363a" textLength="69.5" lengthAdjust="spacingAndGlyphs">23:06:10</text><text transform="translate(1672.2 1628.5) rotate(-90)" font-size="18.8" fill="#30363a" textLength="69.5" lengthAdjust="spacingAndGlyphs">23:06:15</text><text transform="translate(1731.0 1628.5) rotate(-90)" font-size="18.8" fill="#30363a" textLength="69.5" lengthAdjust="spacingAndGlyphs">23:06:20</text><text transform="translate(1789.8 1628.5) rotate(-90)" font-size="18.8" fill="#30363a" textLength="69.5" lengthAdjust="spacingAndGlyphs">23:06:25</text><text transform="translate(1848.6 1628.5) rotate(-90)" font-size="18.8" fill="#30363a" textLength="69.5" lengthAdjust="spacingAndGlyphs">23:06:30</text><text transform="translate(1907.4 1628.5) rotate(-90)" font-size="18.8" fill="#30363a" textLength="69.5" lengthAdjust="spacingAndGlyphs">23:06:35</text><text transform="translate(1966.2 1628.5) rotate(-90)" font-size="18.8" fill="#30363a" textLength="69.5" lengthAdjust="spacingAndGlyphs">23:06:40</text><text transform="translate(2024.9 1628.5) rotate(-90)" font-size="18.8" fill="#30363a" textLength="69.5" lengthAdjust="spacingAndGlyphs">23:06:45</text><text transform="translate(2083.7 1628.5) rotate(-90)" font-size="18.8" fill="#30363a" textLength="69.5" lengthAdjust="spacingAndGlyphs">23:06:50</text><text transform="translate(2142.5 1628.5) rotate(-90)" font-size="18.8" fill="#30363a" textLength="69.5" lengthAdjust="spacingAndGlyphs">23:06:55</text><text transform="translate(2203.3 1613.5) rotate(-90)" font-size="22" fill="#e8474f" textLength="54.5" lengthAdjust="spacingAndGlyphs">23:07</text><text transform="translate(2260.1 1628.5) rotate(-90)" font-size="18.8" fill="#30363a" textLength="69.5" lengthAdjust="spacingAndGlyphs">23:07:05</text><text transform="translate(2318.9 1628.5) rotate(-90)" font-size="18.8" fill="#30363a" textLength="69.5" lengthAdjust="spacingAndGlyphs">23:07:10</text><text transform="translate(2377.7 1628.5) rotate(-90)" font-size="18.8" fill="#30363a" textLength="69.5" lengthAdjust="spacingAndGlyphs">23:07:15</text><text transform="translate(2436.5 1628.5) rotate(-90)" font-size="18.8" fill="#30363a" textLength="69.5" lengthAdjust="spacingAndGlyphs">23:07:20</text><text transform="translate(2495.2 1628.5) rotate(-90)" font-size="18.8" fill="#30363a" textLength="69.5" lengthAdjust="spacingAndGlyphs">23:07:25</text><text transform="translate(2554.0 1628.5) rotate(-90)" font-size="18.8" fill="#30363a" textLength="69.5" lengthAdjust="spacingAndGlyphs">23:07:30</text><text transform="translate(2612.8 1628.5) rotate(-90)" font-size="18.8" fill="#30363a" textLength="69.5" lengthAdjust="spacingAndGlyphs">23:07:35</text><text transform="translate(2671.6 1628.5) rotate(-90)" font-size="18.8" fill="#30363a" textLength="69.5" lengthAdjust="spacingAndGlyphs">23:07:40</text><text transform="translate(2730.4 1628.5) rotate(-90)" font-size="18.8" fill="#30363a" textLength="69.5" lengthAdjust="spacingAndGlyphs">23:07:45</text><text transform="translate(2789.2 1628.5) rotate(-90)" font-size="18.8" fill="#30363a" textLength="69.5" lengthAdjust="spacingAndGlyphs">23:07:50</text><text transform="translate(2848.0 1628.5) rotate(-90)" font-size="18.8" fill="#30363a" textLength="69.5" lengthAdjust="spacingAndGlyphs">23:07:55</text><text transform="translate(2908.7 1613.5) rotate(-90)" font-size="22" fill="#e8474f" textLength="54.5" lengthAdjust="spacingAndGlyphs">23:08</text><text transform="translate(2965.5 1628.5) rotate(-90)" font-size="18.8" fill="#30363a" textLength="69.5" lengthAdjust="spacingAndGlyphs">23:08:05</text><text transform="translate(3024.3 1628.5) rotate(-90)" font-size="18.8" fill="#30363a" textLength="69.5" lengthAdjust="spacingAndGlyphs">23:08:10</text><text transform="translate(3083.1 1628.5) rotate(-90)" font-size="18.8" fill="#30363a" textLength="69.5" lengthAdjust="spacingAndGlyphs">23:08:15</text><text transform="translate(3141.9 1628.5) rotate(-90)" font-size="18.8" fill="#30363a" textLength="69.5" lengthAdjust="spacingAndGlyphs">23:08:20</text><text transform="translate(3200.7 1628.5) rotate(-90)" font-size="18.8" fill="#30363a" textLength="69.5" lengthAdjust="spacingAndGlyphs">23:08:25</text><text transform="translate(3259.5 1628.5) rotate(-90)" font-size="18.8" fill="#30363a" textLength="69.5" lengthAdjust="spacingAndGlyphs">23:08:30</text><text transform="translate(3318.3 1628.5) rotate(-90)" font-size="18.8" fill="#30363a" textLength="69.5" lengthAdjust="spacingAndGlyphs">23:08:35</text><text transform="translate(3377.0 1628.5) rotate(-90)" font-size="18.8" fill="#30363a" textLength="69.5" lengthAdjust="spacingAndGlyphs">23:08:40</text><text transform="translate(3435.8 1628.5) rotate(-90)" font-size="18.8" fill="#30363a" textLength="69.5" lengthAdjust="spacingAndGlyphs">23:08:45</text><text transform="translate(3494.6 1628.5) rotate(-90)" font-size="18.8" fill="#30363a" textLength="69.5" lengthAdjust="spacingAndGlyphs">23:08:50</text><text transform="translate(3553.4 1628.5) rotate(-90)" font-size="18.8" fill="#30363a" textLength="69.5" lengthAdjust="spacingAndGlyphs">23:08:55</text><text transform="translate(3614.2 1613.5) rotate(-90)" font-size="22" fill="#e8474f" textLength="54.5" lengthAdjust="spacingAndGlyphs">23:09</text><text transform="translate(3671.0 1628.5) rotate(-90)" font-size="18.8" fill="#30363a" textLength="69.5" lengthAdjust="spacingAndGlyphs">23:09:05</text><text transform="translate(192.8 1679.0) rotate(-90)" font-size="22" fill="#e8474f" textLength="120" lengthAdjust="spacingAndGlyphs">07-17 23:04</text><text transform="translate(3720.0 1679.0) rotate(-90)" font-size="22" fill="#e8474f" textLength="120" lengthAdjust="spacingAndGlyphs">07-17 23:09</text><rect x="28" y="1738.0" width="22" height="22" fill="#2f9a3c" stroke="#3a3a3a" stroke-width="1.5"/><text x="62" y="1758.0" font-size="24.2" fill="#3a4146" text-anchor="start" textLength="461" lengthAdjust="spacingAndGlyphs">MemoryPool: CodeCache maximum size</text><text x="562.5" y="1758.0" font-size="24.2" fill="#3a4146" text-anchor="start">[平均]</text><text x="774.5" y="1758.0" font-size="24.2" fill="#3a4146" text-anchor="end" textLength="86.1" lengthAdjust="spacingAndGlyphs">240 MB</text><text x="921" y="1758.0" font-size="24.2" fill="#3a4146" text-anchor="end" textLength="86.1" lengthAdjust="spacingAndGlyphs">240 MB</text><text x="1067.7" y="1758.0" font-size="24.2" fill="#3a4146" text-anchor="end" textLength="86.1" lengthAdjust="spacingAndGlyphs">240 MB</text><text x="1214.3" y="1758.0" font-size="24.2" fill="#3a4146" text-anchor="end" textLength="86.1" lengthAdjust="spacingAndGlyphs">240 MB</text><rect x="28" y="1767.5" width="22" height="22" fill="#3f83b5" stroke="#3a3a3a" stroke-width="1.5"/><text x="62" y="1787.5" font-size="24.2" fill="#3a4146" text-anchor="start" textLength="423.3" lengthAdjust="spacingAndGlyphs">MemoryPool: Code Cache committed</text><text x="562.5" y="1787.5" font-size="24.2" fill="#3a4146" text-anchor="start">[平均]</text><text x="774.5" y="1787.5" font-size="24.2" fill="#3a4146" text-anchor="end" textLength="107.5" lengthAdjust="spacingAndGlyphs">14.13 MB</text><text x="921" y="1787.5" font-size="24.2" fill="#3a4146" text-anchor="end" textLength="71.9" lengthAdjust="spacingAndGlyphs">14 MB</text><text x="1067.7" y="1787.5" font-size="24.2" fill="#3a4146" text-anchor="end" textLength="93.3" lengthAdjust="spacingAndGlyphs">14.1 MB</text><text x="1214.3" y="1787.5" font-size="24.2" fill="#3a4146" text-anchor="end" textLength="107.5" lengthAdjust="spacingAndGlyphs">14.13 MB</text><rect x="28" y="1797.0" width="22" height="22" fill="#f0522a" stroke="#3a3a3a" stroke-width="1.5"/><text x="62" y="1817.0" font-size="24.2" fill="#3a4146" text-anchor="start" textLength="354" lengthAdjust="spacingAndGlyphs">MemoryPool: Code Cache used</text><text x="562.5" y="1817.0" font-size="24.2" fill="#3a4146" text-anchor="start">[平均]</text><text x="774.5" y="1817.0" font-size="24.2" fill="#3a4146" text-anchor="end" textLength="107.5" lengthAdjust="spacingAndGlyphs">13.17 MB</text><text x="921" y="1817.0" font-size="24.2" fill="#3a4146" text-anchor="end" textLength="107.5" lengthAdjust="spacingAndGlyphs">12.89 MB</text><text x="1067.7" y="1817.0" font-size="24.2" fill="#3a4146" text-anchor="end" textLength="107.5" lengthAdjust="spacingAndGlyphs">13.12 MB</text><text x="1214.3" y="1817.0" font-size="24.2" fill="#3a4146" text-anchor="end" textLength="107.5" lengthAdjust="spacingAndGlyphs">13.19 MB</text><text x="743.5" y="1728.5" font-size="24.2" fill="#3a4146" text-anchor="end">最新</text><text x="890" y="1728.5" font-size="24.2" fill="#3a4146" text-anchor="end">最小</text><text x="1036.7" y="1728.5" font-size="24.2" fill="#3a4146" text-anchor="end">平均</text><text x="1183.3" y="1728.5" font-size="24.2" fill="#3a4146" text-anchor="end">最大</text></svg>
</body></html>
